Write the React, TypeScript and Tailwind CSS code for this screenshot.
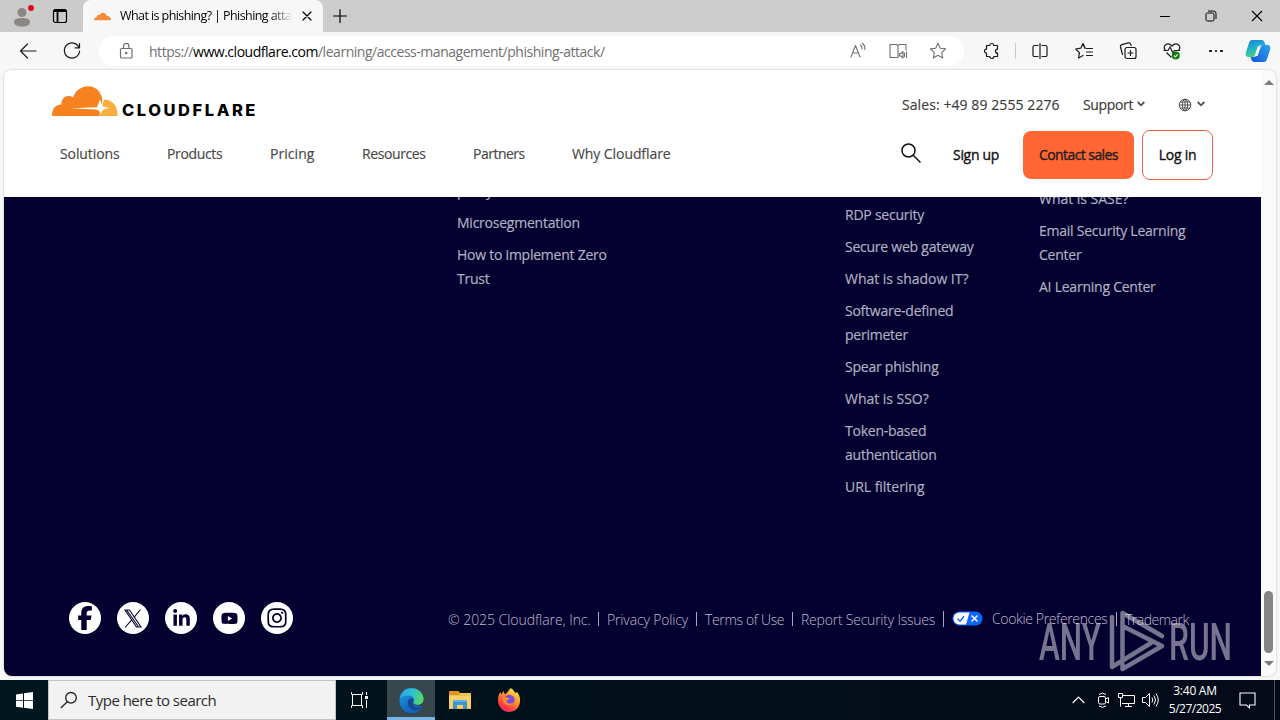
import React from "react";
import { FaFacebookF, FaLinkedinIn, FaYoutube, FaInstagram } from "react-icons/fa6";

type Kids = { children: React.ReactNode };

function Stroke({ children, size = 20, width = 1.2, className = "" }: Kids & { size?: number; width?: number; className?: string }) {
  return (
    <svg width={size} height={size} viewBox="0 0 20 20" fill="none" stroke="currentColor" strokeWidth={width} strokeLinecap="round" strokeLinejoin="round" className={`block shrink-0 ${className}`}>
      {children}
    </svg>
  );
}

const starPath = "M10 2.3l2.3 4.9 5.3.7-3.9 3.7 1 5.3L10 14.3l-4.7 2.6 1-5.3L2.4 7.900l5.300-.7z";

function TabStrip() {
  return (
    <div className="flex h-8 bg-[#cdcdcd]">
      <div className="flex h-8 w-[83px] items-center rounded-br-md bg-[#cbcbcb] pl-3">
        <svg width="22" height="24" viewBox="0 0 22 24" className="block">
          <circle cx="10" cy="8.500" r="4.500" fill="#8b8785" />
          <path d="M2 18c0-3 3-4 8-4s8 1 8 4-3 4.500-8 4.500-8-1.500-8-4.500z" fill="#8b8785" />
          <circle cx="19" cy="4" r="3" fill="#e00b1c" />
        </svg>
        <Stroke className="ml-4 text-black" width={1.2}>
          <rect x="3.500" y="3.500" width="13" height="13" rx="2" />
          <path d="M4 5h12M7.500 6v10" strokeWidth="1.800" />
        </Stroke>
      </div>
      <div className="flex h-8 w-[240px] items-center rounded-t-lg bg-[#f7f7f7] pl-[11px]">
        <svg width="17" height="9" viewBox="0 0 66 31" className="block shrink-0">
          <path d="M0 30C0 21 5 18 10 18 10 10 16 8 21 11 25-3 46-4 50 14 60 13 66 20 66 30z" fill="#f48a3c" />
        </svg>
        <div className="ml-[9px] w-[176px] overflow-hidden text-[12.5px] whitespace-nowrap text-black [mask-image:linear-gradient(to_right,black_86%,transparent_98%)]">
          <span className="tracking-[-0.58px]">What is phishing? | Phishing attack</span>
        </div>
        <Stroke size={16} width={1.5} className="ml-[3px]"><path d="M5 5l10 10M15 5L5 15" /></Stroke>
      </div>
      <div className="flex w-[34px] items-center justify-center">
        <Stroke width={1.2}><path d="M10 3.500v13M3.500 10h13" /></Stroke>
      </div>
      <div className="ml-auto flex items-center">
        <div className="flex w-[46px] justify-center"><div className="h-px w-[10px] bg-black" /></div>
        <div className="flex w-[46px] justify-center">
          <svg width="12" height="12" viewBox="0 0 12 12" fill="none" stroke="black"><rect x="1" y="3" width="8" height="8" rx="1.500" /><path d="M3 1h5.500A2.500 2.500 0 0 1 11 3.500V9" /></svg>
        </div>
        <div className="flex w-[46px] justify-center">
          <svg width="12" height="12" viewBox="0 0 12 12" fill="none" stroke="black" strokeWidth="1.100"><path d="M1 1l10 10M11 1L1 11" /></svg>
        </div>
      </div>
    </div>
  );
}

function Toolbar() {
  return (
    <div className="flex h-[38px] items-center bg-[#f7f7f7] text-[#1a1a1a]">
      <Stroke className="ml-[18px]"><path d="M18 10H2.500M9.500 3L2.500 10l7 7" /></Stroke>
      <Stroke className="ml-6"><path d="M17 6.500A7.600 7.600 0 1 0 17.600 10M17.500 2.500v4.300h-4.300" /></Stroke>
      <div className="ml-[17px] flex h-[30px] w-[865px] items-center rounded-full bg-white pl-[17px] text-[#707070]">
        <Stroke>
          <rect x="4.500" y="7.500" width="11.500" height="9.500" rx="1.300" />
          <path d="M7.500 7.500V5a2.700 2.700 0 0 1 5.400 0v2.500" /><circle cx="10.200" cy="12" r=".7" fill="currentColor" />
        </Stroke>
        <div className="ml-[13px] w-[690px] text-[14px] whitespace-nowrap">
          <span className="tracking-[-0.47px]">https://<span className="text-black">www.cloudflare.com</span>/learning/access-management/phishing-attack/</span>
        </div>
        <Stroke className="ml-[9px]" width={1.1}><path d="M3 16L7.500 4.500 12 16M4.500 12h6M12.500 4q2 1.500 1.500 4M14 2q3.500 2.500 2.800 6.500" /></Stroke>
        <Stroke className="ml-5" width={1.1}><path d="M9.500 16.500H2V3.500h6.500L10 4.500l1.500-1H18V9M10 4.500v12M11.500 12.500v2.500h1.500l2 2v-6.500l-2 2zM16.500 12v3.500M18.500 11v5.500" /></Stroke>
        <Stroke className="ml-5" width={1.1}><path d={starPath} /></Stroke>
      </div>
      <Stroke className="ml-[18px]"><path d="M4.500 4.500h3.300a2 2 0 1 1 4 0h3.700v3.700a2 2 0 1 0 0 4v3.300h-3.700a2 2 0 0 1-4 0H4.500v-3.300a2 2 0 1 1 0-4z" /></Stroke>
      <div className="ml-[13px] h-4 w-px bg-[#c8c8c8]" />
      <Stroke className="ml-[14px]"><path d="M10 2.500v15M8 4.500H4.500a1.500 1.500 0 0 0-1.500 1.500v8a1.500 1.500 0 0 0 1.500 1.500H8M12 4.500h3.500a1.500 1.500 0 0 1 1.500 1.500v8a1.500 1.500 0 0 1-1.500 1.500H12" /></Stroke>
      <Stroke className="ml-6"><path d="M11 7.500L9 2.500 6.800 7.200 1.700 8l3.700 3.700-.8 5.300L9 14.500M9 2.500l2.200 4.700M12.500 7.500h6M12.500 11h6M12.500 14.500h6" /></Stroke>
      <Stroke className="ml-6"><rect x="7" y="6.500" width="11" height="11" rx="2" /><path d="M12.500 9.500v5M10 12h5M4.500 13.500l-2-7.500a2 2 0 0 1 1.400-2.400l6.500-1.700a2 2 0 0 1 2.300 1.300l.4 1.300" /></Stroke>
      <svg width="20" height="20" viewBox="0 0 20 20" fill="none" stroke="currentColor" strokeWidth="1.200" className="ml-6 block">
        <path d="M3.500 9.500C0 5 5.500 0 10 5c4.500-5 10 0 6.500 4.500M1.500 9.500H6l2-3.500 3 6 1.500-2.500H18M4.500 11.500L9.500 16.500" />
        <circle cx="13.800" cy="14.500" r="4" fill="#107c10" stroke="none" /><path d="M12 14.600l1.400 1.300 2.300-2.600" stroke="white" />
      </svg>
      <div className="ml-[27px] flex gap-[3px]">
        <div className="size-[2.500px] rounded-full bg-black" /><div className="size-[2.500px] rounded-full bg-black" /><div className="size-[2.500px] rounded-full bg-black" />
      </div>
      <svg width="26" height="24" viewBox="0 0 26 24" className="ml-[22px] block">
        <defs>
          <linearGradient id="cpA" x1="0" y1="0" x2="0.300" y2="1"><stop offset="0" stopColor="#1c7fd8" /><stop offset=".5" stopColor="#1fb0cc" /><stop offset="1" stopColor="#45cf86" /></linearGradient>
          <linearGradient id="cpB" x1="1" y1="0" x2="0" y2="1"><stop offset="0" stopColor="#2ba4ec" /><stop offset="1" stopColor="#1456d8" /></linearGradient>
        </defs>
        <path d="M7 1h9c3 0 3.500 2 4.500 5h-4c-2 0-3 1-3.500 3l-2 6c-.7 2-2 3-4 3H4c-3 0-4-2-3-5L4 4c.6-2 1.500-3 3-3z" fill="url(#cpA)" />
        <path d="M19 23h-9c-3 0-3.500-2-4.500-5h3c2 0 3-1 3.500-3l2-6c.7-2 2-3 4-3h4c3 0 4 2 3 5l-3 9c-.6 2-1.500 3-3 3z" fill="url(#cpB)" />
        <path d="M13 7h3l-3.500 10h-3z" fill="#f4fbff" />
      </svg>
    </div>
  );
}

function Logo() {
  return (
    <svg width="206" height="32" viewBox="0 0 206 32" className="block overflow-visible">
      <path d="M0 30C0 22 4 18.500 9.500 18.500 9 11 16 8 21 11.500 25-2 44-4 49 9c3 7 0 12-2 21z" fill="#f6821f" />
      <path d="M47 30L52 13.500C60 13 66 20 65.500 30z" fill="#fbad41" />
      <path d="M18 22.300l27-1 3-8 2.500 7 6.500 1.700-6.500 2-1.500 4-2-3.500-3-1z" fill="white" />
      <text x="70" y="30" fontFamily="Inter, sans-serif" fontWeight="800" fontSize="15.500" letterSpacing="2.400" textLength="136" lengthAdjust="spacingAndGlyphs" fill="black" stroke="none">CLOUDFLARE</text>
    </svg>
  );
}

const Chevron = () => (
  <svg width="8" height="6" viewBox="0 0 8 6" fill="none" stroke="#505050" strokeWidth="1.800" className="mb-px block"><path d="M.7 1L4 4.300 7.300 1" /></svg>
);

function SiteHeader() {
  return (
    <header className="flex h-[127px] flex-col bg-white text-[14px] text-[#404040] [-webkit-text-stroke:0.18px]">
      <div className="flex h-[60px] items-start pl-12">
        <div className="w-[850px] pt-4"><Logo /></div>
        <div className="flex h-[69px] items-center whitespace-nowrap">
          <div className="w-[181px]"><span className="tracking-[0.08px]">Sales: +49 89 2555 2276</span></div>
          <div className="w-[54px]"><span className="tracking-[-0.35px]">Support</span></div>
          <Chevron />
          <svg width="14" height="14" viewBox="0 0 14 14" fill="none" stroke="#505050" strokeWidth="1" className="mr-[5px] ml-[33px] block">
            <circle cx="7" cy="7" r="5.800" /><ellipse cx="7" cy="7" rx="2.700" ry="5.800" /><path d="M1.200 7h11.600M7 1v12M2 4h10M2 10h10" />
          </svg>
          <Chevron />
        </div>
      </div>
      <nav className="flex h-[50px] items-center pl-14 whitespace-nowrap text-[#4a4a4a]">
        <div className="w-[107px] pb-[3px]"><span className="tracking-[-0.1px]">Solutions</span></div>
        <div className="w-[103px] pb-[3px]"><span className="tracking-[-0.35px]">Products</span></div>
        <div className="w-[92px] pb-[3px]"><span className="tracking-[0.05px]">Pricing</span></div>
        <div className="w-[111px] pb-[3px]"><span className="tracking-[-0.4px]">Resources</span></div>
        <div className="w-[99px] pb-[3px]"><span className="tracking-[-0.5px]">Partners</span></div>
        <div className="w-[328px] pb-[3px]"><span className="tracking-[-0.08px]">Why Cloudflare</span></div>
        <svg width="22" height="22" viewBox="0 0 22 22" fill="none" stroke="#111" strokeWidth="1.500" className="mb-1 block"><circle cx="8.500" cy="8.500" r="6.500" /><path d="M13.200 13.200L20.500 20.500" /></svg>
        <div className="ml-[31px] w-[70px] pb-0.5 text-[#111] [-webkit-text-stroke:0.35px]"><span className="tracking-[-0.3px]">Sign up</span></div>
        <div className="flex h-12 w-[111px] items-center justify-center rounded-lg bg-[#ff6633] pb-0.5 text-[#1d1d1d] [-webkit-text-stroke:0.35px]"><span className="tracking-[-0.58px]">Contact sales</span></div>
        <div className="ml-2 flex h-[50px] w-[71px] items-center justify-center rounded-lg border border-[#f06048] pb-0.5 text-[#111] [-webkit-text-stroke:0.35px]"><span className="tracking-[-0.25px]">Log in</span></div>
      </nav>
    </header>
  );
}

type LinkItem = { label: string; wide?: boolean };

const colZero: LinkItem[] = [{ label: "proxy?" }, { label: "Microsegmentation" }, { label: "How to implement Zero Trust" }];
const colGlossary: LinkItem[] = [
  { label: "RDP security" },
  { label: "Secure web gateway" },
  { label: "What is shadow IT?", wide: true },
  { label: "Software-defined perimeter" },
  { label: "Spear phishing" },
  { label: "What is SSO?", wide: true },
  { label: "Token-based authentication" },
  { label: "URL filtering", wide: true },
];
const colCenters: LinkItem[] = [{ label: "What is SASE?", wide: true }, { label: "Email Security Learning Center" }, { label: "AI Learning Center" }];

function LinkColumn({ items, className }: { items: LinkItem[]; className: string }) {
  return (
    <ul className={`flex flex-col gap-2 text-[14px] leading-6 text-[#b3b0c1] [-webkit-text-stroke:0.18px] ${className}`}>
      {items.map((t) => <li key={t.label} className={t.wide ? "tracking-[-0.03px]" : "tracking-[-0.24px]"}>{t.label}</li>)}
    </ul>
  );
}

const XGlyph = () => (
  <svg width="18" height="19" viewBox="0 0 18 19" fill="none" stroke="currentColor" strokeWidth="1.100" className="block">
    <path d="M1 1h4.500L17 18h-4.500zM3 1.500L14.300 17.500" /><path d="M16.500.5L10 8.300M8 10.700L1 18.500" />
  </svg>
);

const socials = [
  { icon: <FaFacebookF size={24} />, id: "fb" },
  { icon: <XGlyph />, id: "x" },
  { icon: <FaLinkedinIn size={19} />, id: "in" },
  { icon: <FaYoutube size={17} />, id: "yt" },
  { icon: <FaInstagram size={22} />, id: "ig" },
];

const Bar = ({ className }: { className: string }) => <div className={`w-px shrink-0 bg-[#a9a6b8] ${className}`} />;

function SiteFooter() {
  return (
    <section className="flex h-[479px] flex-col overflow-hidden bg-[#040030]">
      <div className="flex h-[389px] items-start">
        <LinkColumn items={colZero} className="-mt-[18px] ml-[453px] w-[160px]" />
        <LinkColumn items={colGlossary} className="mt-[6px] ml-[228px] w-[150px]" />
        <LinkColumn items={colCenters} className="-mt-[10px] ml-11 w-[170px]" />
      </div>
      <div className="flex h-16 items-center pl-[65px]">
        <div className="flex w-[379px] gap-4">
          {socials.map((s) => <div key={s.id} className="flex size-8 items-center justify-center rounded-full bg-white text-[#060030]">{s.icon}</div>)}
        </div>
        <div className="flex items-center pt-px text-[14px] font-light whitespace-nowrap text-[#c0bdcd]">
          <div className="w-[150px] pt-px"><span className="tracking-[-0.05px]">© 2025 Cloudflare, Inc.</span></div>
          <Bar className="h-[14px]" />
          <div className="w-[97px] pt-px pl-2"><span className="tracking-[-0.15px]">Privacy Policy</span></div>
          <Bar className="h-[14px]" />
          <div className="w-[95px] pt-px pl-2"><span className="tracking-[-0.35px]">Terms of Use</span></div>
          <Bar className="h-[14px]" />
          <div className="w-[150px] pt-px pl-2"><span className="tracking-[-0.22px]">Report Security Issues</span></div>
          <Bar className="h-4" />
          <svg width="31" height="15" viewBox="0 0 31 15" className="mr-[9px] ml-2 block">
            <rect x=".5" y=".5" width="30" height="14" rx="7" fill="#0a66ff" />
            <path d="M7.500 1.500H17.500L14 13.500H7.500a6 6 0 0 1 0-12z" fill="white" />
            <path d="M5.500 7.800l2.500 2.400 4-5" fill="none" stroke="#0a66ff" strokeWidth="1.400" /><path d="M19.500 4.500l6 6M25.500 4.500l-6 6" stroke="white" strokeWidth="1.500" />
          </svg>
          <div className="w-[124px] pb-px"><span className="tracking-[-0.36px]">Cookie Preferences</span></div>
          <Bar className="h-[14px]" />
          <div className="pt-px pl-2"><span className="tracking-[-0.5px]">Trademark</span></div>
        </div>
      </div>
    </section>
  );
}

function Watermark() {
  return (
    <svg width="194" height="64" viewBox="0 0 194 64" className="pointer-events-none absolute top-[609px] left-[1038px]">
      <g opacity=".52" fill="#e2dfe8" stroke="none" fontFamily="Roboto, sans-serif" fontWeight="500" fontSize="51">
        <text x="1" y="51" textLength="62" lengthAdjust="spacingAndGlyphs">ANY</text>
        <text x="131" y="51" textLength="63" lengthAdjust="spacingAndGlyphs">RUN</text>
      </g>
      <path d="M74 8V58L113 34M84.500 50V4L124 27M84.500 17L124 37 84.500 60V55" opacity=".52" fill="none" stroke="#e2dfe8" strokeWidth="4.500" strokeLinejoin="round" strokeLinecap="round" />
    </svg>
  );
}

function Scrollbar() {
  return (
    <div className="flex w-[15px] flex-col items-center bg-[#fafafa]">
      <div className="mt-[10px] h-0 w-0 border-x-[5px] border-b-[5px] border-x-transparent border-b-[#7b7b7b]" />
      <div className="mt-[506px] h-[62px] w-[9px] rounded-full bg-[#858585]" />
      <div className="mt-2 h-0 w-0 border-x-[5px] border-t-[5px] border-x-transparent border-t-[#7b7b7b]" />
    </div>
  );
}

function Taskbar() {
  return (
    <div className="flex h-10 items-center bg-gradient-to-r from-[#00171f] via-[#011019] to-[#050a18] text-white">
      <div className="flex w-12 justify-center">
        <svg width="17" height="17" viewBox="0 0 17 17" fill="white" className="block"><path d="M0 2.500l7-1v6.700H0zM8 1.300L17 0v8.200H8zM0 9h7v6.700l-7-1zM8 9h9v8l-9-1.300z" /></svg>
      </div>
      <div className="flex h-10 w-[288px] items-center border border-[#c4c4c4] bg-[#f2f2f2] pl-[11px] text-[#2b2b2b]">
        <svg width="18" height="18" viewBox="0 0 18 18" fill="none" stroke="#222" strokeWidth="1.300" className="block"><circle cx="11" cy="6.800" r="5.300" /><path d="M7.300 10.700L.8 17" /></svg>
        <div className="ml-[10px] text-[15px] whitespace-nowrap"><span className="tracking-[-0.52px]">Type here to search</span></div>
      </div>
      <div className="flex w-[51px] justify-center pr-[3px]">
        <svg width="18" height="16" viewBox="0 0 18 16" fill="none" stroke="white" className="block"><path d="M.5 0v2.500h11V0M.5 16v-2.500h11V16M1.500 2.500v11M10.500 2.500v11M15.500 0v3M15.500 8v8" /><rect x="14.500" y="4.500" width="2" height="2" fill="white" /></svg>
      </div>
      <div className="flex h-10 w-12 items-center justify-center border-b-[3px] border-[#76b5e4] bg-[#36474e] pt-[3px]">
        <svg width="25" height="25" viewBox="0 0 25 25" className="block">
          <defs>
            <linearGradient id="edT" x1="0" y1=".3" x2="1" y2=".5"><stop offset="0" stopColor="#2aa6e0" /><stop offset=".5" stopColor="#30c0d0" /><stop offset="1" stopColor="#56d860" /></linearGradient>
            <linearGradient id="edL" x1="0" y1="0" x2=".4" y2="1"><stop offset="0" stopColor="#1f9de0" /><stop offset="1" stopColor="#1263c0" /></linearGradient>
          </defs>
          <path d="M.5 12.500a12 12 0 0 1 24-1.500l-5 6 3.800 1.500A12 12 0 0 1 .5 12.500z" fill="url(#edL)" />
          <path d="M.8 10C2.500 3.500 7 .5 12.500.5c7 0 12 5 12 10.500 0 4-3 6-6.500 6-3 0-4.300-1.200-3.500-2.500C16.500 11 14 7.500 9.500 7.500 5.500 7.500 2 9 .8 10z" fill="url(#edT)" />
          <path d="M9 13c-1.500 5 3 9.500 8 9 2.500-.3 4.800-1.500 6.300-3.500-5.500 2.300-9.800.5-9.500-3.500.2-1.500 1.300-2 .7-3.500C13 9.500 10 10 9 13z" fill="#154a8c" />
          <path d="M14 14.800c-.5 2.500 4.500 4.500 8.500 1.500-2 .9-6.800 1.200-8.500-1.500z" fill="#36474e" />
        </svg>
      </div>
      <div className="flex w-[50px] justify-center">
        <svg width="22" height="20" viewBox="0 0 22 20" className="block">
          <path d="M0 1h9l2 2h11v16H0z" fill="#f0c050" /><path d="M0 1h9l2 2-1 2H0z" fill="#dc9526" /><path d="M0 6h22v12H0z" fill="#f6cf66" />
          <path d="M4 10h14v9h-4v-4H8v4H4z" fill="#3f93cf" /><path d="M4 10h14v2H4z" fill="#5fb0e6" />
        </svg>
      </div>
      <div className="flex w-12 justify-center">
        <svg width="24" height="24" viewBox="0 0 24 24" className="block">
          <defs><linearGradient id="fx" x1=".8" y1="0" x2=".2" y2="1"><stop offset="0" stopColor="#fff04a" /><stop offset=".4" stopColor="#ff9a2a" /><stop offset=".75" stopColor="#ff4040" /><stop offset="1" stopColor="#e01f78" /></linearGradient></defs>
          <path d="M1 13C1 8 2 6 3.500 4L4.500 6.500 6.500 3 8 6.500C10 5 11.500 3 13.500 0 16 1 17 3.500 18.500 5L20 4c2.500 3 3.300 6 3 9.500C22.500 20 17.500 24 12 24S1.300 19.500 1 13z" fill="url(#fx)" />
          <circle cx="12.300" cy="12" r="5.300" fill="#7a4be0" /><path d="M6 9c3-.5 4.500 1 7 1-1 2-3.500 1.500-3.500 3.500 0 2 4 3 7.500.5-1 4-9 5-11-1z" fill="#ff8a2a" />
        </svg>
      </div>
      <div className="ml-auto flex h-10 items-center">
        <svg width="13" height="8" viewBox="0 0 13 8" fill="none" stroke="white" strokeWidth="1.200" className="mr-[12px] block"><path d="M.7 7l5.800-6 5.800 6" /></svg>
        <svg width="13" height="16" viewBox="0 0 13 16" fill="none" stroke="white" className="mr-[8px] block"><rect x="1.500" y="4.500" width="7" height="7.500" rx="1.500" /><path d="M8.500 7l3-1.500v5.500l-3-1.500M2 2.500q3.500-3 7 0M2 14q3.500 2.500 7 0" /></svg>
        <svg width="17" height="15" viewBox="0 0 17 15" fill="none" stroke="white" className="mr-[7px] block"><path d="M5 2.500h11.500v8H4M10.500 10.500v3M7 13.500h7M.5.500h4v4h-4zM2.500 5v8.500" /></svg>
        <svg width="17" height="16" viewBox="0 0 17 16" fill="none" stroke="white" className="mr-[7px] block"><path d="M.5 5.500h3l4-4v13l-4-4h-3zM10 5.500q1.500 2.500 0 5M12 3.500q3 4.500 0 9M14 1.500q4.500 6.500 0 13" /></svg>
        <div className="flex w-[58px] flex-col items-center text-[12px] leading-[18px] whitespace-nowrap">
          <span className="tracking-[-0.25px]">3:40 AM</span>
          <span className="tracking-[-0.5px]">5/27/2025</span>
        </div>
        <svg width="17" height="17" viewBox="0 0 17 17" fill="none" stroke="white" strokeWidth="1.100" className="mr-[18px] ml-[15px] block"><path d="M1 1h15v12h-5.500v2.800L7.500 13H1z" /></svg>
        <div className="mr-[5px] h-10 w-px bg-[#4a5560]" />
      </div>
    </div>
  );
}

export default function App() {
  return (
    <div className="relative flex h-[720px] w-[1280px] flex-col overflow-hidden bg-[#f7f7f7] font-['Open_Sans','Noto_Sans',sans-serif]">
      <TabStrip />
      <Toolbar />
      <div className="mx-1 mb-1 flex h-[606px] overflow-hidden rounded-lg bg-white shadow-[0_0_2px_rgba(0,0,0,0.3)]">
        <main className="w-[1257px]">
          <SiteHeader />
          <SiteFooter />
        </main>
        <Scrollbar />
      </div>
      <Taskbar />
      <Watermark />
    </div>
  );
}
